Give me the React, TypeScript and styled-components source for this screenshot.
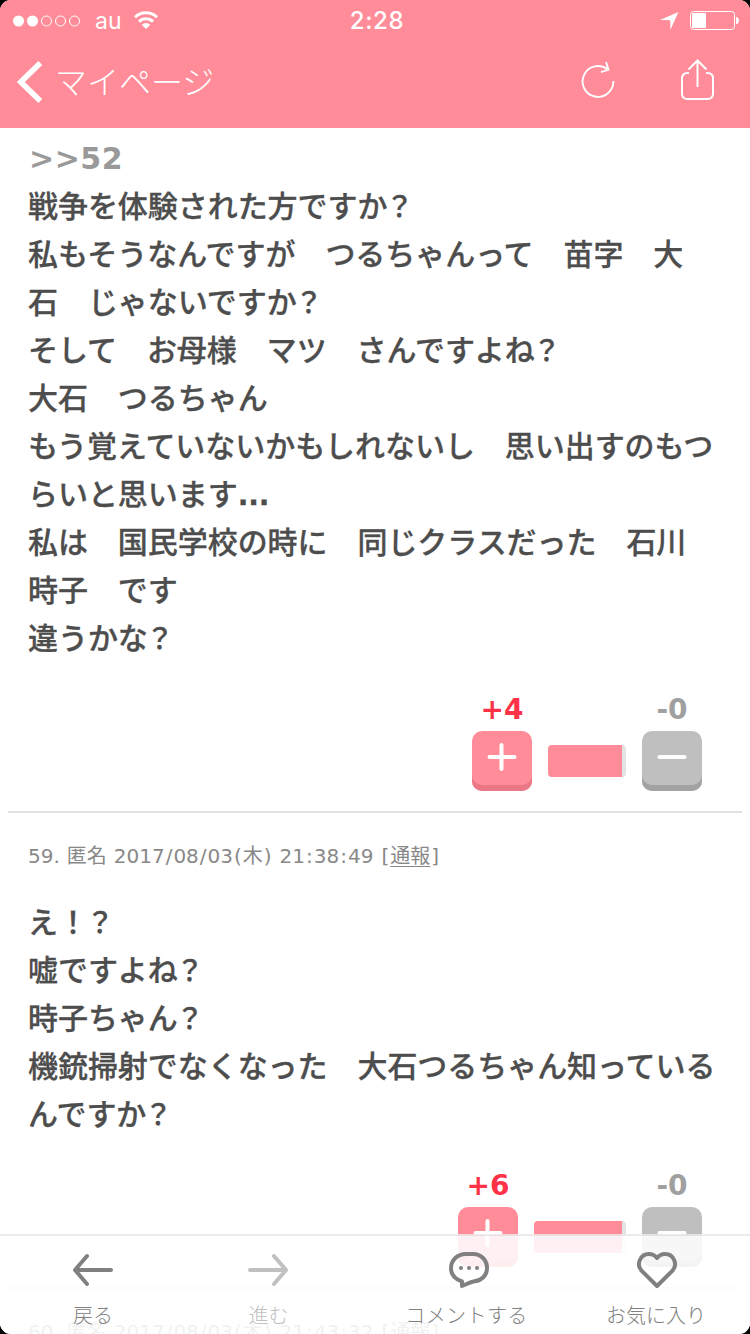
import React from "react";
import styled, { createGlobalStyle } from "styled-components";

const GlobalStyle = createGlobalStyle`
  * { box-sizing: border-box; }
  html, body { margin: 0; background: #000; overflow: hidden; }
`;

const jp = `"Noto Sans CJK JP", sans-serif`;

const Screen = styled.div`
  position: relative;
  width: 750px;
  height: 1334px;
  overflow: hidden;
  border-radius: 11px;
  background: #fff;
  font-family: "DejaVu Sans", ${jp};
`;

const Header = styled.header`
  height: 128px;
  background: #ff8c98;
  color: #fff;
`;

const StatusBar = styled.div`
  display: grid;
  grid-template-columns: 1fr auto 1fr;
  align-items: center;
  height: 40px;
  padding: 2px 11px 0 13px;
  font-family: Inter, sans-serif;
`;

const StatusLeft = styled.div`
  display: flex;
  align-items: center;
`;

const Carrier = styled.span`
  margin: 0 11px 0 14px;
  font-size: 23px;
  line-height: 38px;
`;

const Clock = styled.span`
  padding-left: 2px;
  font-size: 24px;
  font-weight: 500;
  line-height: 38px;
  letter-spacing: 0.6px;
`;

const StatusRight = styled.div`
  display: flex;
  justify-content: flex-end;
  align-items: center;
  gap: 10px;
`;

const NavBar = styled.div`
  display: flex;
  align-items: center;
  height: 84px;
  padding: 0 35px 0 16px;
`;

const NavTitle = styled.h1`
  flex: 1;
  margin: -4px 0 0 11px;
  font-family: ${jp};
  font-size: 32px;
  font-weight: 300;
  line-height: 48px;
`;

const NavIcons = styled.div`
  display: flex;
  align-items: center;
  gap: 66px;
  margin-top: -4px;
`;

const Thread = styled.main`
  padding: 6px 8px 0;
`;

const Post = styled.article`
  padding: 0 20px;
  border-bottom: 2px solid #e3e3e3;
`;

const Meta = styled.div`
  height: 85px;
  padding-top: 27px;
  font-size: 20px;
  line-height: 32px;
  word-spacing: 0.6px;
  color: #888;
  white-space: nowrap;
`;

const Mark = styled.span`
  padding: 0 1px;
`;

const Report = styled.span`
  text-decoration: underline;
  text-decoration-thickness: 1px;
  text-underline-offset: 3px;
`;

const Line = styled.p`
  margin: 0;
  height: 48px;
  font-family: ${jp};
  font-size: 30px;
  font-weight: 500;
  line-height: 44px;
  letter-spacing: -0.05px;
  color: #4d4d4d;
  -webkit-text-stroke: 0.3px #4d4d4d;
  white-space: pre;
`;

const Question = styled.span`
  margin-left: -2px;
  font-size: 28px;
  line-height: 1;
`;

const Dots = styled.span`
  font-family: "DejaVu Sans", sans-serif;
  font-size: 28px;
  font-weight: 700;
  line-height: 1;
`;

const Quote = styled.p`
  margin: 0;
  height: 48px;
  padding-left: 1px;
  font-size: 30px;
  font-weight: 700;
  line-height: 50px;
  letter-spacing: 0.5px;
  color: #999;
`;

const Votes = styled.div`
  display: flex;
  justify-content: flex-end;
  align-items: flex-end;
  gap: 16px;
  height: 149px;
  padding: 0 20px 20px 0;
`;

const Vote = styled.div<{ $color: string }>`
  display: flex;
  flex-direction: column;
  align-items: center;
  width: 60px;
  font-size: 28px;
  font-weight: 700;
  line-height: 42px;
  color: ${(p) => p.$color};
`;

const VoteKey = styled.button<{ $face: string; $edge: string }>`
  display: flex;
  justify-content: center;
  width: 60px;
  height: 60px;
  padding: 12px 0 0;
  border: 0;
  border-radius: 10px;
  background: ${(p) => p.$face};
  box-shadow: inset 0 -6px 0 ${(p) => p.$edge};
`;

const Ratio = styled.div<{ $width: number }>`
  width: ${(p) => p.$width}px;
  height: 32px;
  margin-bottom: 14px;
  border-right: 4px solid #e3e3e3;
  border-radius: 4px;
  background: #ff8c98;
`;

const TabBar = styled.nav`
  position: absolute;
  left: 0;
  right: 0;
  bottom: 0;
  height: 100px;
`;

const TabRule = styled.div`
  height: 2px;
  background: rgba(232, 232, 232, 0.88);
`;

const Tabs = styled.div`
  display: flex;
  height: 98px;
  background: rgba(255, 255, 255, 0.88);
`;

const Tab = styled.div<{ $width: number; $color?: string }>`
  display: flex;
  flex-direction: column;
  align-items: center;
  flex: 0 0 ${(p) => p.$width}px;
  padding-top: 14px;
  color: ${(p) => p.$color ?? "#808080"};
  font-family: ${jp};
  font-size: 20px;
  font-weight: 300;
  line-height: 30px;
`;

const TabLabel = styled.span<{ $shift?: number; $track?: number }>`
  margin-top: 10px;
  padding-right: ${(p) => p.$shift ?? 0}px;
  letter-spacing: ${(p) => p.$track ?? 0}px;
  white-space: nowrap;
`;

const SignalDots = () => (
  <svg width="68" height="14" viewBox="0 0 68 14" fill="none" stroke="#fff">
    <circle cx="5.5" cy="7" r="5.5" fill="#fff" stroke="none" />
    <circle cx="19.5" cy="7" r="5.5" fill="#fff" stroke="none" />
    <circle cx="33.5" cy="7" r="5" />
    <circle cx="47.5" cy="7" r="5" />
    <circle cx="61.5" cy="7" r="5" />
  </svg>
);

const Wifi = () => (
  <svg width="26" height="20" viewBox="0 0 26 20" fill="none" stroke="#fff" strokeWidth="3">
    <path d="M2 6.2A15.6 15.6 0 0 1 24 6.2" />
    <path d="M6 10.6A10 10 0 0 1 20 10.6" />
    <path d="M13 18L8.7 13.700A6.3 6.3 0 0 1 17.3 13.700Z" fill="#fff" stroke="none" />
  </svg>
);

const LocationArrow = () => (
  <svg width="19" height="18" viewBox="0 0 19 18" fill="#fff">
    <path d="M18.4 0L10.4 18L10.2 8.2L0 7.9Z" />
  </svg>
);

const Battery = () => (
  <svg width="50" height="20" viewBox="0 0 50 20">
    <rect x="1.5" y="0.5" width="44" height="18" rx="3" fill="none" stroke="#fff" />
    <rect x="3" y="2" width="14" height="15" rx="1" fill="#fff" />
    <path d="M47 6h1q2 1 2 3.500t-2 3.500h-1z" fill="#fff" />
  </svg>
);

const BackChevron = () => (
  <svg width="28" height="44" viewBox="0 0 28 44" fill="none" stroke="#fff" strokeWidth="5.6">
    <path d="M24.300 3L4.800 22L24.300 41" />
  </svg>
);

const Reload = () => (
  <svg width="34" height="40" viewBox="0 0 34 40" fill="none" stroke="#fff" strokeWidth="1.900">
    <path d="M32.400 21A15.400 15.400 0 1 1 26.800 9.600" />
    <path d="M25 2L27.500 9.700L20 12.200" />
  </svg>
);

const Share = () => (
  <svg width="34" height="42" viewBox="0 0 34 42" fill="none" stroke="#fff" strokeWidth="2">
    <path d="M8 14H6.500Q1 14 1 19.500V34.500Q1 40 6.500 40H26.500Q32 40 32 34.500V19.500Q32 14 26.500 14H25" />
    <path d="M16.500 28V1.500M7.500 10.500L16.500 1.500L25.500 10.500" />
  </svg>
);

const Plus = () => (
  <svg width="30" height="28" viewBox="0 0 30 28" stroke="#fff" strokeWidth="4" strokeLinecap="round">
    <path d="M2.500 14H27.500M14.500 2V26" />
  </svg>
);

const Minus = () => (
  <svg width="30" height="28" viewBox="0 0 30 28" stroke="#fff" strokeWidth="4" strokeLinecap="round">
    <path d="M2.500 14H27.500" />
  </svg>
);

const Arrow = ({ forward = false }: { forward?: boolean }) => (
  <svg width="42" height="40" viewBox="0 0 42 40" fill="none" stroke="currentColor" strokeWidth="4" strokeLinecap="round" strokeLinejoin="round">
    <path d={forward ? "M2 20H38M26 6L38 20L26 34" : "M39 20H3M15 6L3 20L15 34"} />
  </svg>
);

const Bubble = () => (
  <svg width="42" height="40" viewBox="0 0 42 40" fill="none" stroke="currentColor" strokeWidth="4" strokeLinejoin="round">
    <path d="M14 31.500C7 29 3 24.500 3 18.500C3 10 9.500 4 18 4H25C33 4 39 10 39 18C39 26 33 31 25.500 31.500C21 32.500 18 34.500 14 36Z" />
    <g fill="currentColor" stroke="none">
      <circle cx="13" cy="18" r="2" />
      <circle cx="21" cy="18" r="2" />
      <circle cx="29" cy="18" r="2" />
    </g>
  </svg>
);

const Heart = () => (
  <svg width="42" height="40" viewBox="0 0 42 40" fill="none" stroke="currentColor" strokeWidth="4" strokeLinejoin="round">
    <path d="M21 36L5.930 21.070A10 10 0 0 1 13 4Q17.800 4 21 8Q24.200 4 29 4A10 10 0 0 1 36.070 21.070Z" />
  </svg>
);

const VoteRow = ({ plus, width }: { plus: string; width: number }) => (
  <Votes>
    <Vote $color="#ff3347">
      {plus}
      <VoteKey $face="#ff8c98" $edge="#ea7785" aria-label="プラス"><Plus /></VoteKey>
    </Vote>
    <Ratio $width={width} />
    <Vote $color="#a0a0a0">
      -0
      <VoteKey $face="#bfbfbf" $edge="#a2a2a2" aria-label="マイナス"><Minus /></VoteKey>
    </Vote>
  </Votes>
);

/* Slashes, colons and brackets get a little air on both sides. */
const spaced = (text: string) =>
  text.split(/([/:()[\]])/).map((part, i) => (i % 2 ? <Mark key={i}>{part}</Mark> : part));

const PostMeta = ({ no, time }: { no: number; time: string }) => (
  <Meta>
    {spaced(`${no}. 匿名 2017/08/03(木) ${time} [`)}
    <Report>通報</Report>
    {spaced("]")}
  </Meta>
);

const Body = ({ lines }: { lines: string[] }) => (
  <>
    {lines.map((line) => (
      <Line key={line}>
        {line.split(/(？|\.\.\.)/).map((part, i) => {
          if (part === "？") return <Question key={i}>{part}</Question>;
          if (part === "...") return <Dots key={i}>{part}</Dots>;
          return part;
        })}
      </Line>
    ))}
  </>
);

const firstPost = [
  "戦争を体験された方ですか？",
  "私もそうなんですが　つるちゃんって　苗字　大",
  "石　じゃないですか？",
  "そして　お母様　マツ　さんですよね？",
  "大石　つるちゃん",
  "もう覚えていないかもしれないし　思い出すのもつ",
  "らいと思います...",
  "私は　国民学校の時に　同じクラスだった　石川",
  "時子　です",
  "違うかな？",
];

const secondPost = [
  "え！？",
  "嘘ですよね？",
  "時子ちゃん？",
  "機銃掃射でなくなった　大石つるちゃん知っている",
  "んですか？",
];

export default function App() {
  return (
    <>
      <GlobalStyle />
      <Screen>
        <Header>
          <StatusBar>
            <StatusLeft>
              <SignalDots />
              <Carrier>au</Carrier>
              <Wifi />
            </StatusLeft>
            <Clock>2:28</Clock>
            <StatusRight>
              <LocationArrow />
              <Battery />
            </StatusRight>
          </StatusBar>
          <NavBar>
            <BackChevron />
            <NavTitle>マイページ</NavTitle>
            <NavIcons>
              <Reload />
              <Share />
            </NavIcons>
          </NavBar>
        </Header>
        <Thread>
          <Post>
            <Quote>&gt;&gt;52</Quote>
            <Body lines={firstPost} />
            <VoteRow plus="+4" width={78} />
          </Post>
          <Post>
            <PostMeta no={59} time="21:38:49" />
            <Body lines={secondPost} />
            <VoteRow plus="+6" width={92} />
          </Post>
          <Post>
            <PostMeta no={60} time="21:43:32" />
          </Post>
        </Thread>
        <TabBar>
          <TabRule />
          <Tabs>
            <Tab $width={186}><Arrow /><TabLabel>戻る</TabLabel></Tab>
            <Tab $width={165} $color="#c0c0c0"><Arrow forward /><TabLabel>進む</TabLabel></Tab>
            <Tab $width={236}><Bubble /><TabLabel $shift={5} $track={0.4}>コメントする</TabLabel></Tab>
            <Tab $width={140}><Heart /><TabLabel $shift={2}>お気に入り</TabLabel></Tab>
          </Tabs>
        </TabBar>
      </Screen>
    </>
  );
}
